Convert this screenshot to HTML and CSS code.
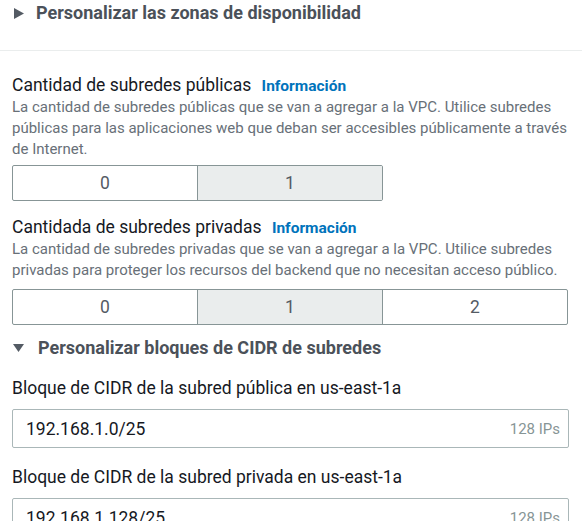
FILE: index.html
```html
<!DOCTYPE html>
<html lang="es">
<head>
<meta charset="utf-8">
<link rel="stylesheet" href="styles.css">
</head>
<body>
<div class="panel">
  <div class="top">
    <div class="expander">
      <svg class="caret" width="10" height="11" viewBox="0 0 10 11"><path d="M0 0 L10 5.5 L0 11 Z" fill="#545b64"/></svg>
      <span>Personalizar las zonas de disponibilidad</span>
    </div>
  </div>
  <div class="body">
    <div class="field f-pub">
      <div class="label">Cantidad de subredes públicas <a class="info">Información</a></div>
      <div class="desc">La cantidad de subredes públicas que se van a agregar a la VPC. Utilice subredes públicas para las aplicaciones web que deban ser accesibles públicamente a través de Internet.</div>
      <div class="seg seg-2">
        <div class="opt">0</div>
        <div class="opt sel">1</div>
      </div>
    </div>
    <div class="field f-priv">
      <div class="label">Cantidada de subredes privadas <a class="info">Información</a></div>
      <div class="desc">La cantidad de subredes privadas que se van a agregar a la VPC. Utilice subredes privadas para proteger los recursos del backend que no necesitan acceso público.</div>
      <div class="seg seg-3">
        <div class="opt">0</div>
        <div class="opt sel">1</div>
        <div class="opt">2</div>
      </div>
    </div>
    <div class="expander exp2">
      <svg class="caret" width="11" height="8" viewBox="0 0 11 8"><path d="M0 0 L11 0 L5.5 8 Z" fill="#545b64"/></svg>
      <span>Personalizar bloques de CIDR de subredes</span>
    </div>
    <div class="cidr">
      <div class="clabel">Bloque de CIDR de la subred pública en us-east-1a</div>
      <div class="input"><span class="val">192.168.1.0/25</span><span class="ips">128 IPs</span></div>
    </div>
    <div class="cidr">
      <div class="clabel">Bloque de CIDR de la subred privada en us-east-1a</div>
      <div class="input"><span class="val">192.168.1.128/25</span><span class="ips">128 IPs</span></div>
    </div>
  </div>
</div>
</body>
</html>
```
FILE: styles.css
```css
html, body {
  margin: 0;
  padding: 0;
  background: #ffffff;
}
body {
  font-family: Roboto, "Noto Sans", Arial, sans-serif;
  color: #16191f;
  width: 582px;
  height: 521px;
  overflow: hidden;
}
.panel {
  width: 582px;
}
.top {
  height: 51px;
  box-sizing: border-box;
  border-bottom: 1px solid #eaeded;
  padding: 2px 0 0 14px;
}
.expander {
  display: flex;
  align-items: center;
  gap: 12px;
  font-size: 18px;
  font-weight: 700;
  color: #4b5159;
  height: 22px;
  line-height: 22px;
}
.body {
  padding: 23px 0 0 12px;
}
.label {
  font-size: 17.5px;
  line-height: 22px;
  color: #16191f;
}
.info {
  font-size: 15.5px;
  font-weight: 700;
  color: #0073bb;
  margin-left: 6px;
}
.desc {
  font-size: 15px;
  line-height: 21px;
  color: #687078;
  width: 560px;
}
.seg {
  display: flex;
  margin-top: 5px;
  height: 36px;
  border: 1px solid #879596;
  border-radius: 2px;
  box-sizing: border-box;
  overflow: hidden;
}
.seg-2 { width: 371px; }
.seg-3 { width: 556px; }
.f-priv .seg { margin-top: 8px; }
.opt {
  flex: 1;
  display: flex;
  align-items: center;
  justify-content: center;
  font-size: 17.5px;
  color: #545b64;
  border-left: 1px solid #879596;
}
.opt:first-child { border-left: none; }
.opt.sel { background: #eaeded; }
.f-priv { margin-top: 15px; }
.exp2 { margin-top: 12px; padding-left: 1px; gap: 14px; }
.cidr { margin-top: 18px; }
.clabel {
  font-size: 17.5px;
  line-height: 22px;
  color: #16191f;
}
.input {
  margin-top: 10px;
  width: 557px;
  height: 39px;
  box-sizing: border-box;
  border: 1px solid #aab7b8;
  border-radius: 2px;
  display: flex;
  align-items: center;
  justify-content: space-between;
  padding: 0 8px 0 13px;
}
.val {
  font-size: 17.5px;
  color: #16191f;
}
.ips {
  font-size: 15px;
  color: #879596;
}
```
